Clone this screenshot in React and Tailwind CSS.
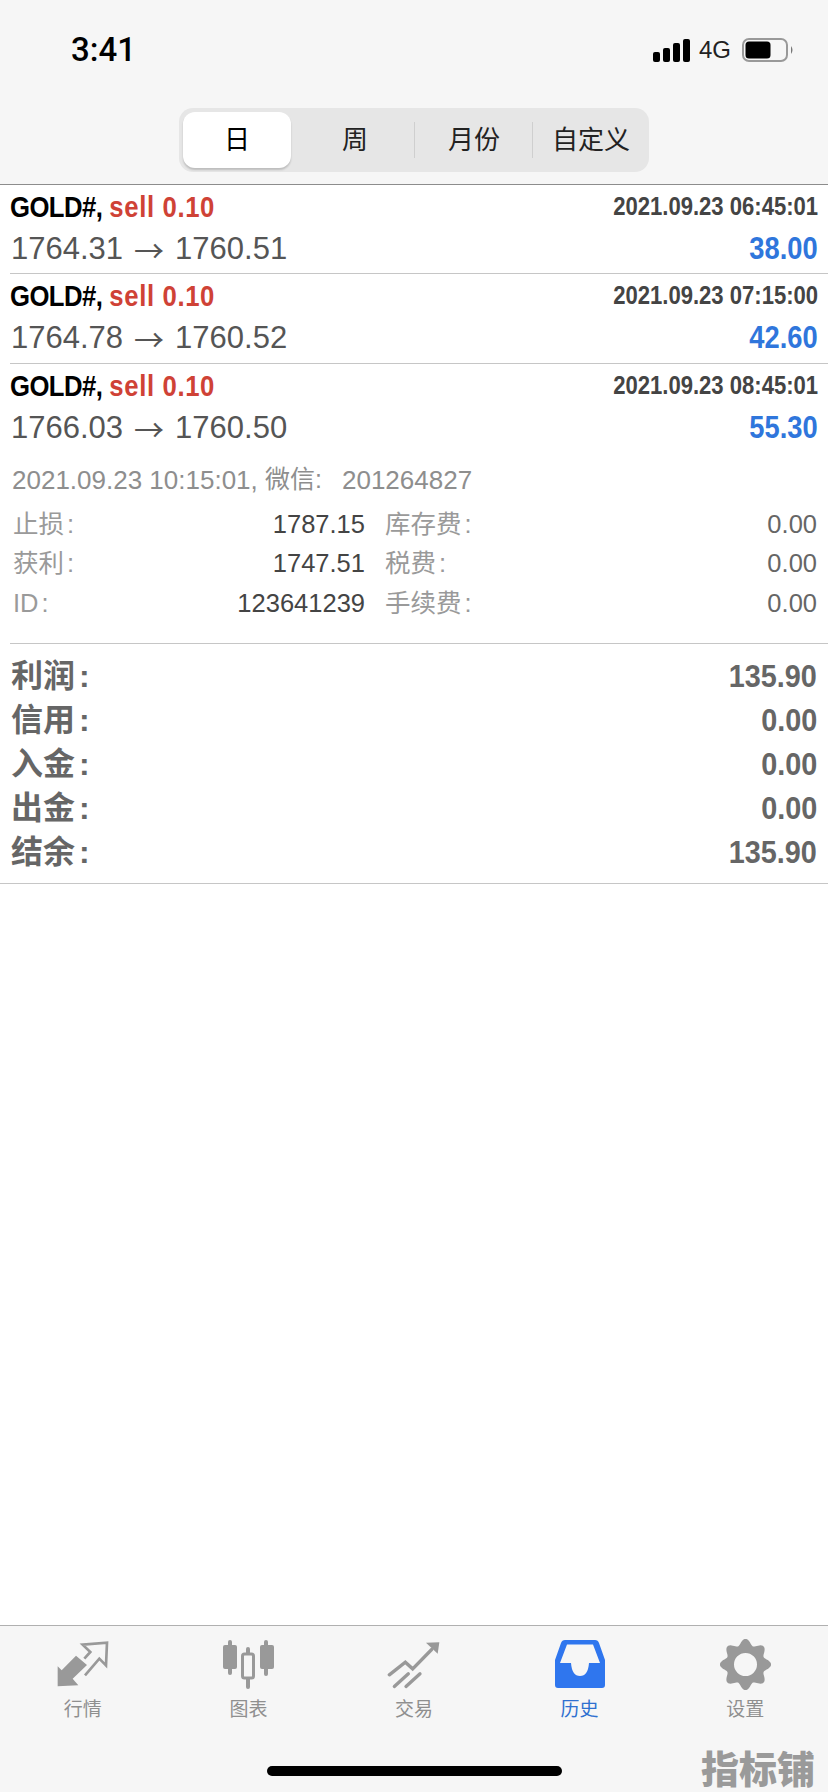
import React from "react";

const TRADES = [
  { from: "1764.31", to: "1760.51", time: "2021.09.23 06:45:01", profit: "38.00", height: "h-[89px]" },
  { from: "1764.78", to: "1760.52", time: "2021.09.23 07:15:00", profit: "42.60", height: "h-[90px]" },
  { from: "1766.03", to: "1760.50", time: "2021.09.23 08:45:01", profit: "55.30", height: "h-[90px]" },
];

const DETAILS = [
  { label: "止损", value: "1787.15", fee: "库存费", amount: "0.00" },
  { label: "获利", value: "1747.51", fee: "税费", amount: "0.00" },
  { label: "ID", value: "123641239", fee: "手续费", amount: "0.00" },
];

const TOTALS = [
  { label: "利润", value: "135.90" },
  { label: "信用", value: "0.00" },
  { label: "入金", value: "0.00" },
  { label: "出金", value: "0.00" },
  { label: "结余", value: "135.90" },
];

const TABS = [
  { id: "quotes", label: "行情" },
  { id: "chart", label: "图表" },
  { id: "trade", label: "交易" },
  { id: "history", label: "历史", active: true },
  { id: "settings", label: "设置" },
];

// gear outline: 8 soft lobes around the centre
const gearPath = () => {
  const pts = [];
  for (let i = 0; i < 160; i++) {
    const a = (i / 160) * Math.PI * 2;
    const r = 22.6 + 3 * Math.cos(8 * a);
    pts.push(`${(25.5 + r * Math.cos(a)).toFixed(2)} ${(25.5 + r * Math.sin(a)).toFixed(2)}`);
  }
  return `M${pts.join(" L")} Z M25.5 14 A11.5 11.5 0 1 0 25.5 37 A11.5 11.5 0 1 0 25.5 14 Z`;
};

const TradeRow = ({ trade, last }) => (
  <div className={`ml-[10px] pr-[10px] ${trade.height} ${last ? "" : "border-b border-[#c6c6c6]"}`}>
    <div className="flex h-[43px] items-center justify-between">
      <span className="inline-block origin-left scale-x-[0.856] text-[30px] font-bold text-black">
        <span className="tracking-[-0.66px]">GOLD#,</span>{" "}
        <span className="tracking-[0.74px] text-[#cf4236]">sell 0.10</span>
      </span>
      <span className="inline-block origin-right scale-x-[0.883] text-[25px] font-bold text-[#444444]">
        {trade.time}
      </span>
    </div>
    <div className="flex h-[42px] items-center justify-between pl-px">
      <span className="flex items-center text-[31px] text-[#555555]">
        {trade.from}
        <span className="mx-[11px] font-['Noto_Sans_CJK_SC'] text-[30px]">→</span>
        {trade.to}
      </span>
      <span className="inline-block origin-right scale-x-[0.88] text-[31px] font-bold text-[#2f76dc]">
        {trade.profit}
      </span>
    </div>
  </div>
);

const TabIcon = ({ name }) => {
  if (name === "quotes") {
    return (
      <svg width="52" height="46" viewBox="48 32 156 138">
        <path d="M50 108 L62 120 L105 76 L138 104 L95 145 L112 165 L50 168 Z" fill="#999999" />
        <path d="M130 85 L148 65 L125 43 L198 37 L195 105 L175 85 L132 135" fill="none" stroke="#999999" strokeWidth="8" />
      </svg>
    );
  }
  if (name === "chart") {
    return (
      <svg width="51" height="49" viewBox="0 0 51 49" fill="#999999">
        <rect x="5" y="0" width="4" height="35" rx="2" />
        <rect x="0" y="5" width="14" height="24" rx="2" />
        <rect x="41" y="0" width="4" height="36" rx="2" />
        <rect x="37" y="5" width="14" height="24" rx="2" />
        <rect x="23" y="7" width="4" height="42" rx="2" />
        <rect x="19.5" y="14" width="11" height="24" rx="2" fill="#f6f6f6" stroke="#999999" strokeWidth="3" />
      </svg>
    );
  }
  if (name === "trade") {
    return (
      <svg width="54" height="49" viewBox="48 24 162 146" fill="none" stroke="#999999" strokeWidth="10" strokeLinecap="round">
        <path d="M55 128 L103 90 L125 110 L182 52" />
        <path d="M165 32 L205 30 L200 65 Z" fill="#999999" stroke="none" />
        <path d="M70 163 L112 125" />
        <path d="M105 163 L147 125" />
      </svg>
    );
  }
  if (name === "history") {
    return (
      <svg width="50" height="48" viewBox="0 0 50 48">
        <path d="M10 0 H40 Q43 0 44 3 L50 20 V45 Q50 48 47 48 H3 Q0 48 0 45 V20 L6 3 Q7 0 10 0 Z" fill="#2f76ee" />
        <path d="M12 4.5 H38 L45 23 H34 Q33 36 25 36 Q17 36 16 23 H5 Z" fill="#f6f6f6" />
      </svg>
    );
  }
  return (
    <svg width="51" height="51" viewBox="0 0 51 51">
      <path fill="#999999" fillRule="evenodd" d={gearPath()} />
    </svg>
  );
};

const App = () => {
  return (
    <div className="relative flex h-[1792px] w-[828px] flex-col overflow-hidden bg-white font-['Liberation_Sans','Noto_Sans_CJK_SC',sans-serif]">
      {/* header */}
      <header className="h-[185px] border-b border-[#8c8c8c] bg-[#f6f6f6]">
        <div className="flex h-[108px] items-start justify-between pl-[71px] pr-[34px] pt-[30px]">
          <span className="font-['Roboto'] text-[33px] font-medium leading-[40px] text-black">3:41</span>
          <div className="mt-[8px] flex items-center">
            <svg width="37" height="23" viewBox="0 0 37 23" fill="#000000">
              <rect x="0" y="13" width="7" height="10" rx="2" />
              <rect x="10" y="9" width="7" height="14" rx="2" />
              <rect x="20" y="4" width="7" height="19" rx="2" />
              <rect x="30" y="0" width="7" height="23" rx="2" />
            </svg>
            <span className="ml-[9px] mr-[11px] text-[24px] leading-none text-[#222222]">4G</span>
            <svg width="52" height="24" viewBox="0 0 52 24" fill="none">
              <rect x="1" y="1" width="44" height="22" rx="6" stroke="#999999" strokeWidth="2" />
              <rect x="3.5" y="3.5" width="25" height="17" rx="3.5" fill="#000000" />
              <path d="M49 8 Q52 12 49 16 Z" fill="#777777" />
            </svg>
          </div>
        </div>
        <div className="ml-[179px] flex h-[64px] w-[470px] items-center rounded-[14px] bg-[#e6e6e6] pl-[4px]">
          <div className="flex h-[56px] w-[108px] items-center justify-center rounded-[12px] bg-white pt-px text-[26px] text-black shadow-[0_2px_2px_rgba(0,0,0,0.18)]">
            日
          </div>
          <div className="flex h-full w-[123px] items-center justify-center pl-[5px] pt-px text-[26px] text-[#222222]">周</div>
          <div className="h-[36px] w-px bg-[#cfcfcf]" />
          <div className="flex h-full w-[117px] items-center justify-center pl-[1px] pt-px text-[26px] text-[#222222]">月份</div>
          <div className="h-[36px] w-px bg-[#cfcfcf]" />
          <div className="flex h-full flex-1 items-center justify-center pt-px text-[26px] text-[#222222]">自定义</div>
        </div>
      </header>

      {/* trades */}
      {TRADES.map((trade, i) => (
        <TradeRow key={trade.time} trade={trade} last={i === TRADES.length - 1} />
      ))}

      <div className="ml-[10px] border-b border-[#c6c6c6] pb-[20px] pr-[11px]">
        <div className="flex h-[50px] items-center pl-[2px] pt-[2px] text-[26px] text-[#8e8e8e]">
          2021.09.23 10:15:01,&nbsp;<span className="text-[25px]">微信:</span>
          <span className="ml-[20px]">201264827</span>
        </div>
        {DETAILS.map((row) => (
          <div key={row.label} className="flex h-[39.5px] items-center pl-[3px] text-[25.5px]">
            <span className="w-[150px] text-[#9a9a9a]">
              {row.label}
              <span className="ml-[3px]">:</span>
            </span>
            <span className="w-[202px] text-right text-[#444444]">{row.value}</span>
            <span className="ml-[20px] flex-1 text-[#9a9a9a]">
              {row.fee}
              <span className="ml-[3px]">:</span>
            </span>
            <span className="text-[#666666]">{row.amount}</span>
          </div>
        ))}
      </div>

      {/* totals */}
      <div className="border-b border-[#c6c6c6] pb-[9px] pl-[11px] pr-[11px] pt-[10px]">
        {TOTALS.map((row) => (
          <div key={row.label} className="flex h-[44px] items-center justify-between">
            <span className="text-[32px] font-bold text-[#666666]">
              {row.label}
              <span className="ml-[4px]">:</span>
            </span>
            <span className="inline-block origin-right scale-x-[0.9] text-[32px] font-bold text-[#666666]">
              {row.value}
            </span>
          </div>
        ))}
      </div>

      <div className="flex-1" />

      {/* tab bar */}
      <nav className="h-[167px] border-t border-[#b0b0b0] bg-[#f6f6f6]">
        <div className="grid grid-cols-5 pt-[13px]">
          {TABS.map((tab) => (
            <div key={tab.id} className="flex flex-col items-center">
              <div className="flex h-[50px] items-center justify-center">
                <TabIcon name={tab.id} />
              </div>
              <span className={`mt-[8px] text-[19px] leading-[26px] ${tab.active ? "text-[#2f70d0]" : "text-[#8f8f8f]"}`}>
                {tab.label}
              </span>
            </div>
          ))}
        </div>
        <div className="mx-auto mt-[43px] h-[10px] w-[295px] rounded-full bg-black" />
      </nav>

      <span className="absolute bottom-[6px] right-[13px] font-['Noto_Sans_CJK_SC'] text-[38px] font-black leading-[38px] text-[#9a9a9a]">
        指标铺
      </span>
    </div>
  );
};

export default App;
